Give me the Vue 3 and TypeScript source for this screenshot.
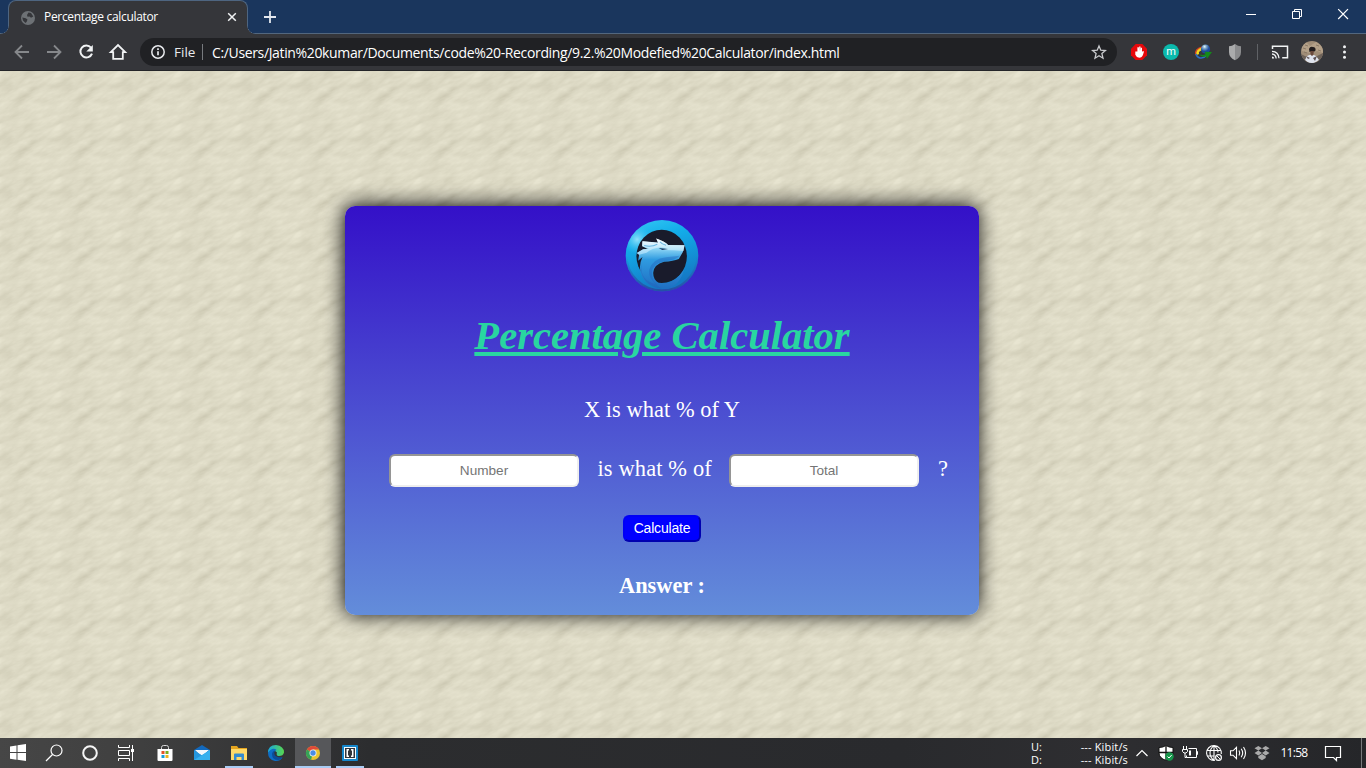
<script setup lang="ts">
import { ref } from 'vue'

const x = ref('')
const total = ref('')
const answer = ref('')

function calculate(): void {
  const a = parseFloat(x.value)
  const b = parseFloat(total.value)
  answer.value = b ? ((a / b) * 100).toFixed(2) + '%' : ''
}
</script>

<template>
  <div class="screen">
    <header class="titlebar">
      <div class="tab">
        <svg class="favicon" viewBox="0 0 14 14"><circle cx="7" cy="7" r="7" fill="#6d7175" /><path d="M1.300 6.500 4.800 7.300 6.500 8.600 5.700 10.800 4.500 12 2 9.500ZM7.500 1.500 10 2 12.300 5.500 10 6.800 8.500 5.500 6.500 5.800 6 4Z" fill="#35363a" /></svg>
        <span class="tab-title">Percentage calculator</span>
        <svg class="tab-x" viewBox="0 0 10 10"><path d="M1.200 1.200 8.800 8.800M8.800 1.200 1.200 8.800" stroke="#f1f3f4" stroke-width="1.500" /></svg>
        <i class="curve left"></i><i class="curve right"></i>
      </div>
      <svg class="plus" viewBox="0 0 12 12"><path d="M6 0v12M0 6h12" stroke="#e4e8ee" stroke-width="1.800" /></svg>
      <div class="winbtns">
        <svg viewBox="0 0 46 28"><path d="M18 14.500h10" stroke="#fff" /></svg>
        <svg viewBox="0 0 46 28"><path d="M18.500 11.500h7v7h-7zM20.500 11.500v-2h7v7h-2" fill="none" stroke="#fff" /></svg>
        <svg viewBox="0 0 46 28"><path d="m18.200 9.200 9.800 9.800m0-9.800-9.800 9.800" stroke="#fff" stroke-width="1.200" /></svg>
      </div>
    </header>

    <nav class="toolbar">
      <svg class="cell first" viewBox="0 0 32 36"><path d="M23 18H10.500M16 11.500 9.500 18l6.500 6.500" fill="none" stroke="#86888b" stroke-width="1.800" /></svg>
      <svg class="cell" viewBox="0 0 32 36"><path d="M9 18h12.500M16 11.500l6.500 6.500-6.500 6.500" fill="none" stroke="#86888b" stroke-width="1.800" /></svg>
      <svg class="cell" viewBox="0 0 32 36"><path d="M21 13.600a6 6 0 1 0 1 6" fill="none" stroke="#f1f3f4" stroke-width="2" /><path d="M22.800 11v6.500h-6.500z" fill="#f1f3f4" /></svg>
      <svg class="cell" viewBox="0 0 32 36"><path d="M8.800 18.200 16 11l7.200 7.200h-2.400v6.700h-9.600v-6.700z" fill="none" stroke="#f1f3f4" stroke-width="1.800" /></svg>
      <div class="omnibox">
        <svg class="info" viewBox="0 0 16 16"><circle cx="8" cy="8" r="6.200" fill="none" stroke="#e8eaed" stroke-width="1.500" /><path d="M8 7.200v4M8 4.300v1.700" stroke="#e8eaed" stroke-width="1.700" /></svg>
        <span class="scheme">File</span><i class="bar"></i>
        <span class="url">C:/Users/Jatin%20kumar/Documents/code%20-Recording/9.2.%20Modefied%20Calculator/index.html</span>
        <svg class="star" viewBox="0 0 16 16"><path d="m8 1.900 1.800 4.300 4.600.4-3.500 3 1.100 4.600L8 11.800l-4 2.400 1.100-4.600-3.500-3 4.600-.4z" fill="none" stroke="#c9cbce" stroke-width="1.300" /></svg>
      </div>
      <div class="extensions">
        <svg class="cell" viewBox="0 0 32 36"><path d="M12.700 10h6.600l4.700 4.700v6.600L19.300 26h-6.600L8 21.300v-6.600z" fill="#e5080b" /><path d="M12.300 17.500v3.300q1.300 3 4 3t3.700-3l1-3.300-1.200-.5-.8 1v-4.300h-1.200l-.3 3v-4.200h-1.300v4.200l-.4-3.500h-1.400v4.300z" fill="#fff" /></svg>
        <svg class="cell" viewBox="0 0 32 36"><circle cx="16" cy="18" r="8" fill="#0bb9ac" /><text x="16" y="21" text-anchor="middle" font-family="Roboto, sans-serif" font-size="11" fill="#fff">m</text></svg>
        <svg class="cell" viewBox="0 0 32 36">
          <defs><radialGradient id="globe" cx=".4" cy=".25"><stop offset="0" stop-color="#eafaff" /><stop offset=".4" stop-color="#7fa9c9" /><stop offset="1" stop-color="#1d4a9e" /></radialGradient></defs>
          <path d="M16 13q-9 2-7 8" fill="none" stroke="#d84223" stroke-width="1.500" /><path d="M16 14.500q-7 2-5 6" fill="none" stroke="#f2d51e" stroke-width="2.500" /><circle cx="18.500" cy="15" r="4.600" fill="url(#globe)" /><path d="M9 20q1 3.500 4 4 4 .500 6-2.500" fill="none" stroke="#286fc9" stroke-width="1.500" /><path d="M12 20q4 2 6.500 0l-1-2.300L25 18l-5 6.700-1-2.500q-4 2-7-2.200Z" fill="#148a1b" />
        </svg>
        <svg class="cell" viewBox="0 0 32 36"><path d="M16 10q3 2.300 6 2.300v6q0 5-6 8z" fill="#8b8c8e" /><path d="M16 10q-3 2.300-6 2.300v6q0 5 6 8z" fill="#aaabac" /></svg>
        <i class="divider"></i>
        <svg class="cell" viewBox="0 0 32 36"><path d="M8.500 15v-2.800H23.500v11.600h-5.300" fill="none" stroke="#f1f3f4" stroke-width="1.500" /><path d="M8 17.300q6.500.200 7 7M8 20q3.700.300 4.200 4.500" fill="none" stroke="#f1f3f4" stroke-width="1.300" /><path d="M8 22.400q2 0 2.200 2.200H8z" fill="#f1f3f4" /></svg>
        <svg class="cell" viewBox="0 0 32 36">
          <defs><clipPath id="face"><circle cx="16" cy="18" r="11" /></clipPath></defs>
          <g clip-path="url(#face)"><path d="M5 7h22v22H5z" fill="#a08d77" /><path d="M5 11l5-3 4 4 6-4 7 5v6l-6-2-7 2-8-2z" fill="#b3a088" /><path d="M7 14l3 1m10-4 3 1m-15 6 3 1m11-3 3 1M9 11l3 1" stroke="#8b7965" /><path d="M5 20l6 3-1 6H5zM21 22l6-3v9h-5z" fill="#6d6259" /><path d="M11 22q5-3 9 0l3 4-5 3h-5l-4-3z" fill="#dfe3ed" /><path d="M13 15q1-3 4-2 3 0 2.500 3.500l-1 1-5 .500z" fill="#211c1d" /><path d="M14.200 17h3.700l-.5 4-1.500 1-1.400-1.500z" fill="#69483b" /><path d="M10 22l4 2-2 1zM17 24l4-2-2 5z" fill="#5d5153" /></g>
        </svg>
        <svg class="cell" viewBox="0 0 32 36"><g fill="#f1f3f4"><circle cx="16.500" cy="12.700" r="1.500" /><circle cx="16.500" cy="18" r="1.500" /><circle cx="16.500" cy="23.300" r="1.500" /></g></svg>
      </div>
    </nav>

    <main class="page">
      <svg class="texture" width="1366" height="667">
        <defs>
          <filter id="grain" x="0" y="0" width="100%" height="100%" color-interpolation-filters="sRGB">
            <feTurbulence type="fractalNoise" baseFrequency="0.085 0.085" numOctaves="5" seed="41" stitchTiles="stitch" />
            <feColorMatrix values="0 0 0 0 .60  0 0 0 0 .58  0 0 0 0 .48  .36 .2 0 0 -.14" />
          </filter>
          <!-- The skew moves each row of tiles by one tile width, so the grain slants and the tiles still line up. -->
          <pattern id="paper" width="60" height="53.400" patternUnits="userSpaceOnUse" patternTransform="matrix(1 0 -1.1236 1 0 0)">
            <rect width="60" height="53.400" fill="#e8e5d1" />
            <rect width="60" height="53.400" filter="url(#grain)" />
          </pattern>
        </defs>
        <rect width="1366" height="667" fill="url(#paper)" />
      </svg>

      <section class="card">
        <svg class="logo" viewBox="40 31 220 220">
          <defs>
            <linearGradient id="ring" x1="0" y1="0" x2=".35" y2="1"><stop offset="0" stop-color="#38c9f4" /><stop offset=".35" stop-color="#13aeea" /><stop offset="1" stop-color="#1478c4" /></linearGradient>
            <radialGradient id="shine" cx="76" cy="92" r="44" gradientUnits="userSpaceOnUse"><stop offset="0" stop-color="#8fe2fb" /><stop offset="1" stop-color="#35bef0" stop-opacity="0" /></radialGradient>
            <linearGradient id="wolf" x1="0" y1="0" x2="0" y2="1"><stop offset="0" stop-color="#e8faff" /><stop offset=".2" stop-color="#8ed6f5" /><stop offset=".42" stop-color="#2f9be0" /><stop offset="1" stop-color="#1f6ec2" /></linearGradient>
            <linearGradient id="brow" x1="0" y1="0" x2="0" y2="1"><stop offset="0" stop-color="#fff" /><stop offset="1" stop-color="#a8defa" /></linearGradient>
            <linearGradient id="rim" x1="0" y1="0" x2="0" y2="1"><stop offset=".5" stop-color="#2865b8" stop-opacity="0" /><stop offset="1" stop-color="#2550a6" /></linearGradient>
          </defs>
          <ellipse cx="150" cy="140" rx="108" ry="106" fill="url(#ring)" />
          <ellipse cx="150" cy="140" rx="108" ry="106" fill="url(#shine)" />
          <ellipse cx="150" cy="140" rx="105" ry="103" fill="none" stroke="url(#rim)" stroke-width="6" />
          <ellipse cx="149" cy="142" rx="75" ry="79" fill="#191b2b" />
          <path d="M217 109 212 129 200 150Q184 157 156 158 126 166 124 190 123 211 140 221L166 221Q196 213 215 182 202 230 166 238 105 240 88 196 79 170 92 144L79 155 82 137 75 132 94 121 108 120 91 112 92 97 138 101 133 89Q160 99 168 108Z" fill="url(#wolf)" />
          <path d="M89 165Q81 187 101 215 120 236 150 238 107 211 112 182 122 149 162 145L203 140Q194 152 156 157 122 163 120 190 118 214 137 226 83 217 89 165Z" fill="#2262ba" opacity=".4" />
          <path d="M92 97 139 102 133 89Q158 98 168 108L217 109 214 126 185 124 151 123 162 118 146 115Q119 118 104 131L82 137 75 132 94 121 112 119 91 111Z" fill="url(#brow)" opacity=".8" />
          <path d="M97 110Q118 116 136 106M144 99Q150 106 162 109" fill="none" stroke="#3a9dd7" stroke-width="3" opacity=".7" />
          <path d="m140 117 28 3-17 3z" fill="#18345f" />
        </svg>
        <h1>Percentage Calculator</h1>
        <p class="caption">X is what % of Y</p>
        <div class="fields">
          <input v-model="x" placeholder="Number" />
          <span class="mid">is what % of</span>
          <input v-model="total" placeholder="Total" />
          <span class="end">?</span>
        </div>
        <button @click="calculate">Calculate</button>
        <p class="answer">Answer :{{ answer }}</p>
      </section>
    </main>

    <footer class="taskbar">
      <div class="task"><svg viewBox="0 0 36 30"><path d="M10 8.500 16.500 7.500V14H10zM17.500 7.300 26 6v8h-8.500zM10 15h6.500v6.700L10 20.700zM17.500 15H26v8l-8.500-1.200z" fill="#fff" /></svg></div>
      <div class="task"><svg viewBox="0 0 36 30"><circle cx="20.500" cy="12.500" r="5.500" fill="none" stroke="#fff" stroke-width="1.200" /><path d="M16.500 16.500 10 23" stroke="#fff" stroke-width="1.300" /></svg></div>
      <div class="task"><svg viewBox="0 0 36 30"><circle cx="18" cy="15" r="6.800" fill="none" stroke="#f5f5f5" stroke-width="2" /></svg></div>
      <div class="task"><svg viewBox="0 0 36 30"><path d="M10.500 7v2.500h11V7M10.500 23v-2.500h11V23M10.500 12.500h11v5h-11zM24.500 7v16" fill="none" stroke="#fff" stroke-width="1" /><path d="M23 11h3v3h-3z" fill="#fff" /></svg></div>
      <div class="task pinned"><svg viewBox="0 0 36 30"><path d="M14.500 12V9.500q0-2 2-2h3q2 0 2 2V12" fill="none" stroke="#d8d8d8" /><path d="M10.500 11h15v11q0 1-1 1h-13q-1 0-1-1z" fill="#fff" /><path d="M14.500 13h3v3h-3z" fill="#e55225" /><path d="M18.500 13h3v3h-3z" fill="#7aac20" /><path d="M14.500 17h3v3h-3z" fill="#179bd8" /><path d="M18.500 17h3v3h-3z" fill="#f1b21b" /></svg></div>
      <div class="task"><svg viewBox="0 0 36 30"><path d="M10 12 18 7l8 5v10H10z" fill="#1269bd" /><path d="M11 12h14l-5 4.500-2 1-3-1.500z" fill="#f2f7fc" /><path d="m10 12 8 5.500 8-5.500v10H10z" fill="#2496dd" /><path d="m10 22 16-10v10z" fill="#36b0ee" /></svg></div>
      <div class="task open"><svg viewBox="0 0 36 30"><path d="M10 8h6l1.500 2H26v12H10z" fill="#e5a51f" /><path d="M10 11h16v11H10z" fill="#ffd969" /><path d="M13 22v-5.500q0-1 1-1h8q1 0 1 1V22h-2.500v-3h-5v3z" fill="#348bcf" /></svg></div>
      <div class="task"><svg viewBox="0 0 36 30"><defs><linearGradient id="edge"><stop stop-color="#19a7df" /><stop offset="1" stop-color="#58d84e" /></linearGradient></defs><path d="M10 15q0-8 8-8 8 1 8 7.500-1 4-6 3.500-2-1-1-3.500-4-4-9 .500" fill="url(#edge)" /><path d="M10 15q4-6 8.500-3.300Q15 13 16 17q2 4 8.500 2.500Q22 23.500 17 23 10 21.500 10 15Z" fill="#0d6dc5" /><path d="M14 16q0-3 4.500-4Q15 14 17 17.500q2.500 2.500 7.500 2-1 2-4 2.500Q14 22 14 16Z" fill="#0b4c98" /></svg></div>
      <div class="task open active"><svg viewBox="0 0 36 30"><circle cx="18" cy="15" r="7" fill="#eac52e" /><path d="M18 15 11.900 11.500A7 7 0 0 1 24.100 11.500H18z" fill="#df4939" /><path d="M18 15l-2 6.800a7 7 0 0 1-4.100-10.300z" fill="#35a357" /><circle cx="18" cy="15" r="3.500" fill="#f4f4f4" /><circle cx="18" cy="15" r="2.700" fill="#4a8ce4" /></svg></div>
      <div class="task open"><svg viewBox="0 0 36 30"><rect x="10" y="7" width="16" height="16" rx="1" fill="#1587cc" /><path d="M12 9h12v12H12z" fill="#f7fafc" /><path d="M13 10h10v10H13z" fill="#30343a" /><path d="M17 11h-2.500v8H17v-1.500h-1v-5h1zM19 11h2.500v8H19v-1.500h1v-5h-1z" fill="#fff" /></svg></div>

      <div class="tray">
        <div class="netmeter"><span>U:</span><span>--- Kibit/s</span><span>D:</span><span>--- Kibit/s</span></div>
        <svg class="tri" viewBox="0 0 24 30"><path d="m6.500 18 5.500-5.500 5.500 5.500" fill="none" stroke="#fff" stroke-width="1.200" /></svg>
        <svg class="tri" viewBox="0 0 24 30"><path d="M12 7.500q3 2 7 2V15q0 5-7 7.500Q5 20 5 15V9.500q4 0 7-2Z" fill="#fff" stroke="#111" /><path d="M12 8v14M5 14.500h14" stroke="#111" stroke-width="1.300" /><circle cx="15.500" cy="18.500" r="4.200" fill="#16964a" /><path d="m13.500 18.500 1.500 1.500 2.700-3" fill="none" stroke="#fff" /></svg>
        <svg class="tri" viewBox="0 0 24 30"><path d="M8.500 17.500v2h10v-9h-8M18.500 13.500h1v3h-1M5.500 8v3m3-3v3M4.500 11.500h5v2l-1.500 1.500H6l-1.500-1.500zM7 15v4.500h1.500" fill="none" stroke="#fff" /><path d="M11 12.500h2v5h-2z" fill="#fff" /></svg>
        <svg class="tri" viewBox="0 0 24 30"><path d="M13 22.300a7.400 7.400 0 1 1 6.300-6.300M12 7.600q-4 3-4 7.400t4 7.400m0-14.800q4 3 4 7M5 12.500h14M5 18h7M12 7.500V22" fill="none" stroke="#fff" stroke-width="1.100" /><circle cx="16.500" cy="19.500" r="2.900" fill="#303134" stroke="#fff" stroke-width="1.200" /><path d="m14.700 17.700 3.600 3.600" stroke="#fff" /></svg>
        <svg class="tri" viewBox="0 0 24 30"><path d="M4.500 12.800H7l3.500-3.500v11.400L7 17.200H4.500zM13 12.500q1.500 2.500 0 5M15.200 10.800q3 4.200 0 8.400M17.500 9q4 6 0 12" fill="none" stroke="#fff" stroke-width="1.100" /></svg>
        <svg class="tri" viewBox="0 0 24 30"><path d="m4.500 10.300 3.800-2.400 3.700 2.300-3.700 2.400zm7.500 0 3.700-2.400 3.800 2.400-3.800 2.300zM4.500 15l3.800-2.400L12 15l-3.700 2.400zM12 15l3.700-2.400 3.800 2.400-3.800 2.400zm-3.700 3.300L12 16l3.700 2.300V20L12 22.300 8.300 20z" fill="#aaa" /></svg>
        <time>11:58</time>
        <svg class="notice" viewBox="0 0 38 30"><path d="M11.500 8.500h15v11h-4v3l-3-3h-8z" fill="none" stroke="#fff" stroke-width="1.200" /></svg>
        <i class="desktop"></i>
      </div>
    </footer>
  </div>
</template>

<style>
body { margin: 0; overflow: hidden; }
</style>

<style scoped>
* { box-sizing: border-box; }
.screen { width: 1366px; height: 768px; display: flex; flex-direction: column; overflow: hidden; font-family: "Open Sans", "Noto Sans", sans-serif; }
svg { display: block; flex: none; }
.titlebar { height: 34px; background: #1a365d; display: flex; border-bottom: 1px solid #53677e; flex: none; }
.tab { position: relative; width: 240px; height: 34px; margin-left: 8px; background: #35363a; border: 1px solid #4e6580; border-bottom: 0; border-radius: 8px 8px 0 0; display: flex; align-items: center; padding-left: 12px; color: #fff; }
.favicon { width: 14px; height: 14px; }
.tab-title { font-size: 12px; letter-spacing: -.32px; margin: -2px 0 0 9px; flex: 1; white-space: nowrap; }
.tab-x { width: 10px; height: 10px; margin: -1px 10px 0 0; }
.curve { position: absolute; bottom: 0; width: 8px; height: 8px; }
.curve.left { left: -8px; background: radial-gradient(circle at 0 0, transparent 7px, #4e6580 7.4px, #35363a 8px); }
.curve.right { right: -8px; background: radial-gradient(circle at 100% 0, transparent 7px, #4e6580 7.4px, #35363a 8px); }
.plus { width: 12px; height: 12px; margin: 11px 0 0 16px; }
.winbtns { display: flex; margin-left: auto; }
.winbtns svg { width: 46px; height: 28px; }
.toolbar { height: 37px; background: #35363a; border-bottom: 1px solid #242529; display: flex; align-items: center; flex: none; }
.cell { width: 32px; height: 36px; }
.first { margin-left: 6px; }
.omnibox { width: 977px; height: 28px; margin: 0 6px; border-radius: 14px; background: #202124; display: flex; align-items: center; padding: 0 10px; color: #fff; font-size: 14px; }
.info, .star { width: 16px; height: 16px; }
.scheme { margin-left: 8px; width: 28px; color: #e8eaed; font-size: 13.500px; }
.bar { width: 1px; height: 16px; background: #777a7e; }
.url { margin-left: 9px; flex: 1; white-space: nowrap; letter-spacing: -.355px; }
.extensions { display: flex; align-items: center; }
.divider { width: 1px; height: 16px; background: #606266; margin: 0 6px; }
.page { height: 667px; position: relative; display: flex; align-items: flex-start; flex: none; }
.texture { position: absolute; inset: 0; }
.card { position: relative; width: 634px; height: 409px; margin: 135px 0 0 345px; padding-top: 13px; border-radius: 10px; background: linear-gradient(#3410c8, #638dda); box-shadow: -1px -1px 20px #000; display: flex; flex-direction: column; align-items: center; font-family: "Liberation Serif", serif; color: #fff; font-size: 22.4px; }
.logo { width: 74px; height: 74px; }
h1 { margin: 20px 0 0; font-size: 40.6px; line-height: 46px; font-style: italic; font-weight: bold; color: #29d6a0; text-decoration: underline; text-decoration-thickness: 4px; text-underline-offset: 3px; white-space: nowrap; }
p { margin: 0; line-height: 26px; white-space: nowrap; }
.caption { margin-top: 38px; letter-spacing: .05px; }
.fields { align-self: stretch; height: 33px; margin-top: 31px; padding-left: 44px; display: flex; line-height: 26px; white-space: nowrap; }
input { width: 190px; height: 33px; border: 2px solid; border-color: #959595 #eee #eee #959595; border-radius: 6px; background: #fff; padding: 1px 2px; text-align: center; font: 13.600px "Liberation Sans", Arial, sans-serif; outline: none; }
input::placeholder { color: #757575; opacity: 1; }
.mid { width: 150px; padding: 2px 0 0 18.500px; letter-spacing: .15px; }
.end { padding: 2px 0 0 19px; }
button { width: 78px; height: 27px; margin-top: 28px; padding: 0 0 1px; border: 2px solid; border-color: #0000f5 #0000b0 #0000b0 #0000f5; border-radius: 6px; background: #00f; color: #fff; font: 14px "Liberation Sans", Arial, sans-serif; letter-spacing: -.2px; }
.answer { margin-top: 31px; font-weight: bold; }
.taskbar { height: 30px; flex: none; display: flex; background: linear-gradient(90deg, #464646 0, #404040 130px, #2c2d2f 370px, #292a2d 900px, #2e2e31 1100px, #252629 100%); color: #fff; }
.task { width: 36px; height: 30px; margin-right: 1px; }
.task:nth-child(-n+4) { margin-right: 0; }
.task svg { width: 36px; height: 30px; }
.pinned { margin-left: 3px; }
.open { background: linear-gradient(#a9ccf4, #a9ccf4) center bottom / 28px 2px no-repeat; }
.active { background: linear-gradient(#a9ccf4, #a9ccf4) center bottom / 36px 2px no-repeat, #56575a; }
.tray { margin-left: auto; display: flex; align-items: center; }
.netmeter { width: 97px; margin-right: 2px; display: grid; grid-template-columns: 20px 1fr; line-height: 13px; font-size: 11px; padding-bottom: 1px; white-space: nowrap; }
.netmeter span:nth-child(even) { text-align: right; letter-spacing: .15px; }
.tri { width: 24px; height: 30px; }
time { width: 40px; margin-top: -1px; text-align: center; font-size: 12px; letter-spacing: -.7px; }
.notice { width: 38px; height: 30px; }
.desktop { width: 1px; height: 30px; background: #77797b; margin: 0 4px 0 9px; }
</style>
